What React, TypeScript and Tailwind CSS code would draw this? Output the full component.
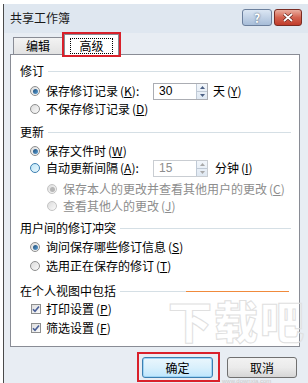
import type { ReactNode } from 'react';

const font = { fontFamily: '"Noto Sans CJK SC", "Noto Sans", sans-serif' };

function Radio({ checked = false, disabled = false, hot = false }: { checked?: boolean; disabled?: boolean; hot?: boolean }) {
  const ring = disabled ? 'border-[#c4c4c4]' : hot ? 'border-[#3c7fb1]' : 'border-[#8e8f8f]';
  const fill = hot ? 'bg-linear-to-br from-[#bfe6f7] to-[#e9f7fd]' : 'bg-linear-to-br from-[#dcdcdc] to-[#fafafa]';
  return (
    <span className={`grid h-[10px] w-[10px] shrink-0 place-items-center rounded-full border ${ring} ${fill}`}>
      {checked && (
        <span
          className={`h-[5px] w-[5px] rounded-full ${
            disabled ? 'bg-[#b5b5b5]' : 'bg-linear-to-br from-[#1d4c77] to-[#5fa3d9]'
          }`}
        />
      )}
    </span>
  );
}

function Check() {
  return (
    <span className="grid h-[10px] w-[10px] shrink-0 place-items-center border border-[#8e8f8f] bg-linear-to-br from-[#dedede] to-[#fbfbfb]">
      <svg width="8" height="8" viewBox="0 0 8 8">
        <path d="M1 4.2 L3 6.3 L7 1.4" fill="none" stroke="#4a5f97" strokeWidth="1.6" />
      </svg>
    </span>
  );
}

function Key({ k }: { k: string }) {
  return (
    <span className="ml-[2px]">
      (<span className="underline underline-offset-1">{k}</span>)
    </span>
  );
}

function Header({ children, split = false }: { children: ReactNode; split?: boolean }) {
  return (
    <div className="flex h-[18px] items-center pl-[9px]">
      <span>{children}</span>
      {split ? (
        <span className="ml-[4px] mr-[10px] flex flex-1">
          <span className="h-px w-[66px] bg-[#d5dfe5]" />
          <span className="h-px flex-1 bg-[#f08a3c]" />
        </span>
      ) : (
        <span className="ml-[4px] mr-[8px] h-px flex-1 bg-[#d5dfe5]" />
      )}
    </div>
  );
}

function Spin({ value, disabled = false }: { value: string; disabled?: boolean }) {
  return (
    <span
      className={`flex h-[17px] w-[55px] items-stretch border ${
        disabled ? 'border-[#c9cdd2] text-[#8d8d8d]' : 'border-[#abadb3] text-black'
      } bg-white`}
    >
      <span className="flex-1 pl-[5px] text-[12px] leading-[15px]" style={{ fontFamily: '"Liberation Sans", sans-serif' }}>
        {value}
      </span>
      <span className="flex w-[11px] flex-col border-l border-[#c0cad6] bg-linear-to-b from-[#f2f6fb] to-[#dfe8f2]">
        <span className="grid flex-1 place-items-center border-b border-[#c0cad6]">
          <svg width="5" height="3" viewBox="0 0 5 3">
            <path d="M0 3 L2.5 0 L5 3 Z" fill={disabled ? '#a8a8a8' : '#4d6185'} />
          </svg>
        </span>
        <span className="grid flex-1 place-items-center">
          <svg width="5" height="3" viewBox="0 0 5 3">
            <path d="M0 0 L2.5 3 L5 0 Z" fill={disabled ? '#a8a8a8' : '#4d6185'} />
          </svg>
        </span>
      </span>
    </span>
  );
}

export default function App() {
  return (
    <div className="relative h-[383px] w-[308px] overflow-hidden bg-white text-[12px] text-black" style={font}>
      <div className="ml-[3px] mt-[4px] flex h-[379px] w-[305px] flex-col border-l border-[#4a4a4a] bg-[#e8edf3]">
        {/* title bar */}
        <div className="flex h-[29px] items-start bg-[#dfe7f0] pl-[6px] pr-[6px] pt-[5px]">
          <span className="mt-[2px] text-[12px] leading-[14px] text-[#1a1a1a]">共享工作簿</span>
          <span className="flex-1" />
          <span className="grid h-[17px] w-[30px] place-items-center rounded-[3px] border border-[#6b7f9c] bg-linear-to-b from-[#dbe6f3] to-[#a7bdd8] text-[12px] font-bold leading-none text-white [text-shadow:0_0_2px_#34495f]">
            ?
          </span>
          <span className="ml-[2px] grid h-[17px] w-[28px] place-items-center rounded-[3px] border border-[#7a2b22] bg-linear-to-b from-[#e9ad9f] via-[#d3624f] to-[#c03c2b]">
            <svg width="12" height="9" viewBox="0 0 12 9">
              <path d="M2 1 L10 8 M10 1 L2 8" stroke="#5a1a12" strokeWidth="3" />
              <path d="M2 1 L10 8 M10 1 L2 8" stroke="#fff" strokeWidth="1.8" />
            </svg>
          </span>
        </div>

        {/* tabs */}
        <div className="flex h-[21px] items-end pl-[9px]">
          <span className="flex h-[17px] w-[50px] items-center justify-center border border-b-0 border-[#898c95] bg-linear-to-b from-[#f3f3f3] to-[#e2e2e2]">
            编辑
          </span>
          <span className="relative z-10 mb-[-1px] ml-[1px] flex h-[21px] w-[55px] items-start justify-center border border-b-0 border-[#898c95] bg-white pt-[3px]">
            <span className="border border-dotted border-black px-[8px] leading-[14px]">高级</span>
            <span className="absolute left-[-3px] top-[-3px] h-[25px] w-[59px] border-2 border-[#d9202a]" />
          </span>
        </div>

        {/* panel */}
        <div className="ml-[6px] flex h-[293px] w-[290px] flex-col border border-[#898c95] bg-white pt-[7px]">
          <div className="h-[20px]">
            <Header>修订</Header>
          </div>
          <div className="flex h-[18px] items-center pl-[19px]">
            <Radio checked />
            <span className="ml-[6px] w-[107px]">
              保存修订记录<Key k="K" />:
            </span>
            <Spin value="30" />
            <span className="ml-[5px]">
              天<Key k="Y" />
            </span>
          </div>
          <div className="flex h-[23px] items-start pl-[19px]">
            <span className="flex h-[18px] items-center">
              <Radio />
              <span className="ml-[6px]">
                不保存修订记录<Key k="D" />
              </span>
            </span>
          </div>
          <div className="h-[19px]">
            <Header>更新</Header>
          </div>
          <div className="flex h-[17px] items-start pl-[19px]">
            <span className="flex h-[18px] items-center">
              <Radio checked />
              <span className="ml-[6px]">
                保存文件时<Key k="W" />
              </span>
            </span>
          </div>
          <div className="flex h-[21px] items-start pl-[19px]">
            <span className="flex h-[18px] items-center">
              <Radio hot />
              <span className="ml-[6px] w-[107px]">
                自动更新间隔<Key k="A" />:
              </span>
              <Spin value="15" disabled />
              <span className="ml-[7px]">
                分钟<Key k="I" />
              </span>
            </span>
          </div>
          <div className="flex h-[17px] items-start pl-[36px] text-[#8d8d8d]">
            <span className="flex h-[18px] items-center">
              <Radio checked disabled />
              <span className="ml-[6px]">
                保存本人的更改并查看其他用户的更改<Key k="C" />
              </span>
            </span>
          </div>
          <div className="flex h-[22px] items-start pl-[36px] text-[#8d8d8d]">
            <span className="flex h-[18px] items-center">
              <Radio disabled />
              <span className="ml-[6px]">
                查看其他人的更改<Key k="J" />
              </span>
            </span>
          </div>
          <div className="h-[19px]">
            <Header>用户间的修订冲突</Header>
          </div>
          <div className="flex h-[19px] items-start pl-[19px]">
            <span className="flex h-[18px] items-center">
              <Radio checked />
              <span className="ml-[6px]">
                询问保存哪些修订信息<Key k="S" />
              </span>
            </span>
          </div>
          <div className="flex h-[25px] items-start pl-[19px]">
            <span className="flex h-[18px] items-center">
              <Radio />
              <span className="ml-[6px]">
                选用正在保存的修订<Key k="T" />
              </span>
            </span>
          </div>
          <div className="h-[18px]">
            <Header split>在个人视图中包括</Header>
          </div>
          <div className="flex h-[19px] items-start pl-[20px]">
            <span className="flex h-[18px] items-center">
              <Check />
              <span className="ml-[5px]">
                打印设置<Key k="P" />
              </span>
            </span>
          </div>
          <div className="flex h-[18px] items-center pl-[20px]">
            <Check />
            <span className="ml-[5px]">
              筛选设置<Key k="F" />
            </span>
          </div>
        </div>

        {/* buttons */}
        <div className="mt-[10px] flex justify-end gap-[14px] pr-[11px]">
          <span className="relative flex h-[21px] w-[71px] items-center justify-center rounded-[3px] border border-[#3c7fb1] bg-linear-to-b from-[#eaf6fd] via-[#d9f0fc] to-[#bee6fd] shadow-[inset_0_0_0_1px_#9fd4f4]">
            确定
            <span className="absolute left-[-6px] top-[-6px] h-[30px] w-[83px] border-2 border-[#d9202a]" />
          </span>
          <span className="flex h-[21px] w-[70px] items-center justify-center rounded-[3px] border border-[#707070] bg-linear-to-b from-[#f2f2f2] via-[#ebebeb] to-[#d6d6d6]">
            取消
          </span>
        </div>
      </div>

      {/* watermark */}
      <span
        className="pointer-events-none absolute left-[168px] top-[298px] text-[44px] leading-none tracking-[2px] text-transparent [-webkit-text-stroke:1px_#e0e0e0]"
        style={{ fontFamily: '"Noto Sans CJK SC", sans-serif', fontWeight: 900 }}
      >
        下载吧
      </span>
      <span
        className="pointer-events-none absolute left-[222px] top-[378px] text-[6px] leading-none text-[#c8c8c8]"
        style={{ fontFamily: '"Liberation Sans", sans-serif' }}
      >
        www.downxia.com
      </span>
    </div>
  );
}
